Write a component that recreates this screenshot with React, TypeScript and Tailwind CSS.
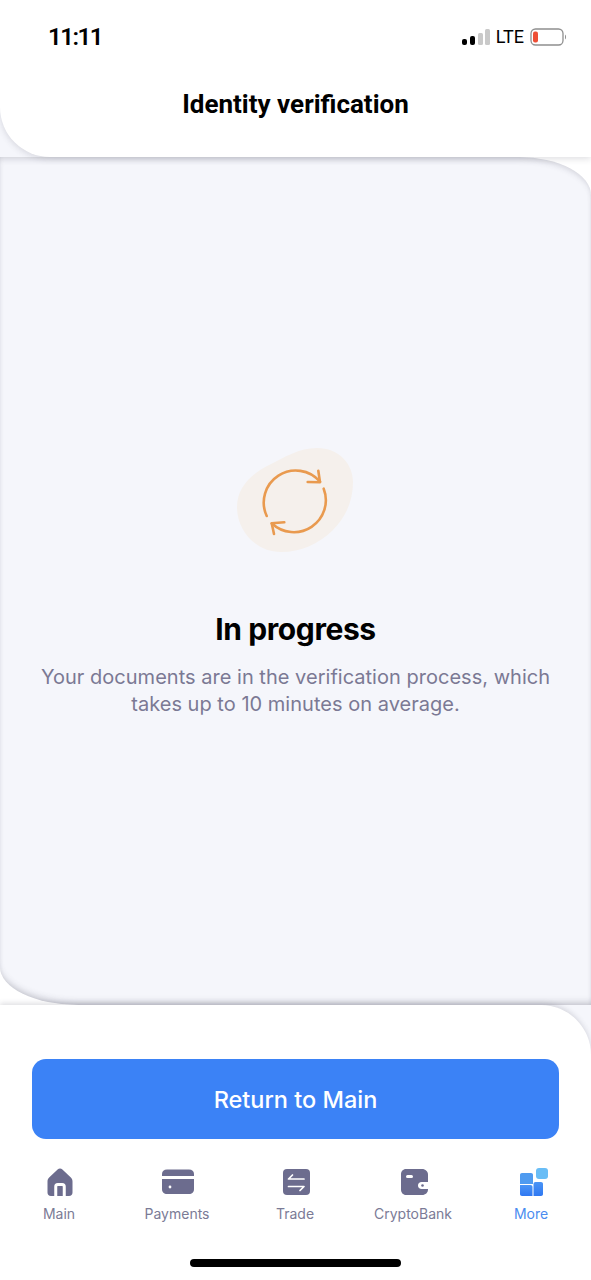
import React from 'react';

const Signal = () => (
  <svg width="28" height="16" viewBox="0 0 28 16">
    <rect x="0" y="10" width="5" height="6" rx="2" fill="#000" />
    <rect x="8" y="7" width="5" height="9" rx="2" fill="#000" />
    <rect x="16" y="4" width="5" height="12" rx="1.5" fill="#c9c9c9" />
    <rect x="23" y="0" width="5" height="16" rx="1.5" fill="#c9c9c9" />
  </svg>
);

const Battery = () => (
  <svg width="37" height="18" viewBox="0 0 37 18">
    <rect x="1" y="1" width="32" height="16" rx="4.5" fill="none" stroke="#8f8f8f" strokeWidth="1.3" />
    <rect x="3" y="3.5" width="5" height="11" rx="2" fill="#ee4f36" />
    <path d="M35 6.5 C36.4 7.4 36.4 10.6 35 11.5 Z" fill="#8f8f8f" />
  </svg>
);

const ProgressIcon = () => (
  <svg width="160" height="135" viewBox="0 0 160 135" fill="none">
    <path
      d="M102 18 C124 18 138 34 138 52 C138 72 130 88 118 100 C104 114 86 122 66 122 C40 122 22 100 22 77 C22 58 35 45 52 36 C70 27 84 18 102 18 Z"
      fill="#f5f0ec"
    />
    <g stroke="#e99a4f" strokeWidth="2.6" strokeLinecap="round" strokeLinejoin="round">
      <path d="M51.7 86 A32 32 0 0 1 105 51.7" />
      <path d="M103.3 40.7 L105 52.3 L92.7 52" />
      <path d="M108.7 58.7 A32 32 0 0 1 56.7 93.3" />
      <path d="M69.3 92.3 L56.7 93.3 L59 104" />
    </g>
  </svg>
);

const HomeIcon = () => (
  <svg width="30" height="30" viewBox="0 0 30 30">
    <path
      d="M12.6 2.6 C14 1.1 16 1.1 17.4 2.6 L25.6 10.2 C27 11.5 27.5 12.6 27.5 14.4 L27.5 25.5 C27.5 27.6 26.2 29 24 29 L6 29 C3.8 29 2.5 27.6 2.5 25.5 L2.5 14.4 C2.5 12.6 3 11.5 4.4 10.2 Z"
      fill="#6c6c8e"
    />
    <path d="M10.75 30 V19.5 C10.75 18.2 11.6 17.5 12.8 17.5 H17.2 C18.4 17.5 19.25 18.2 19.25 19.5 V30" fill="none" stroke="#fff" strokeWidth="3" />
  </svg>
);

const CardIcon = () => (
  <svg width="32" height="26" viewBox="0 0 32 26">
    <path d="M0 7 V5 C0 2 2 0.5 5 0.5 H27 C30 0.5 32 2 32 5 V7 Z" fill="#6c6c8e" />
    <path d="M0 10 H32 V20 C32 23.5 30 25 27 25 H5 C2 25 0 23.5 0 20 Z" fill="#6c6c8e" />
    <circle cx="8" cy="18" r="1.4" fill="#fff" />
  </svg>
);

const TradeIcon = () => (
  <svg width="27" height="26" viewBox="0 0 27 26">
    <rect x="0" y="0" width="27" height="26" rx="4" fill="#6c6c8e" />
    <g stroke="#fff" strokeWidth="1.7" strokeLinecap="round" strokeLinejoin="round" fill="none">
      <path d="M21 10 H5.5 L9.5 6" />
      <path d="M5.5 17.5 H21 L17 21.5" />
    </g>
  </svg>
);

const WalletIcon = () => (
  <svg width="27" height="26" viewBox="0 0 27 26">
    <path d="M5 0 H21 C24.5 0 27 2.5 27 5.5 V20.5 C27 23.5 24.5 26 21 26 H5 C2 26 0 23.5 0 20.5 V5 C0 2.5 2 0 5 0 Z" fill="#6c6c8e" />
    <rect x="5" y="6" width="7" height="3" rx="1.5" fill="#fff" />
    <path d="M20.5 13 H27 V20 H20.5 C18.5 20 17 18.5 17 16.5 C17 14.5 18.5 13 20.5 13 Z" fill="#fff" />
    <circle cx="21.5" cy="16.5" r="1.3" fill="#6c6c8e" />
  </svg>
);

const MoreIcon = () => (
  <svg width="32" height="30" viewBox="0 0 32 30">
    <defs>
      <linearGradient id="moreDark" x1="0" y1="0" x2="0" y2="1">
        <stop offset="0" stopColor="#4a94f5" />
        <stop offset="1" stopColor="#2f78f2" />
      </linearGradient>
    </defs>
    <rect x="20" y="1" width="12" height="11" rx="3" fill="#69bdf6" />
    <path d="M6 6 H15 C16.2 6 17 6.8 17 8 V17 H4 V8 C4 6.8 4.8 6 6 6 Z" fill="#4f9bf0" />
    <path d="M4 18 H14.5 C15.7 18 16.5 18.8 16.5 20 V29 H6 C4.8 29 4 28.2 4 27 Z" fill="url(#moreDark)" />
    <path d="M19.5 15 H25 C26.2 15 27 15.8 27 17 V27 C27 28.2 26.2 29 25 29 H17.5 V17 C17.5 15.8 18.3 15 19.5 15 Z" fill="url(#moreDark)" />
  </svg>
);

const tabs = [
  { label: 'Main', icon: <HomeIcon />, active: false },
  { label: 'Payments', icon: <CardIcon />, active: false },
  { label: 'Trade', icon: <TradeIcon />, active: false },
  { label: 'CryptoBank', icon: <WalletIcon />, active: false },
  { label: 'More', icon: <MoreIcon />, active: true },
];

export default function App() {
  return (
    <div className="flex h-[1280px] w-full flex-col overflow-hidden bg-white font-['Inter',sans-serif]">
      <div className="relative z-10 bg-[#f5f6fb]">
        <header className="h-[157px] rounded-bl-[50px] bg-white shadow-[0_2px_6px_rgba(60,60,80,0.16)]">
          <div className="flex items-center justify-between pt-[22px] pr-[24px] pl-[48px]">
            <span className="font-['Roboto',sans-serif] text-[24px] leading-[30px] font-semibold tracking-[-1.5px] text-black">
              11:11
            </span>
            <div className="flex items-center">
              <Signal />
              <span className="ml-[6px] font-['Roboto',sans-serif] text-[18px] leading-[30px] text-black">LTE</span>
              <span className="ml-[6px]">
                <Battery />
              </span>
            </div>
          </div>
          <h1 className="mt-[37px] text-center font-['Roboto',sans-serif] text-[26px] leading-[30px] font-bold text-black">
            Identity verification
          </h1>
        </header>
      </div>

      <div className="flex flex-1 flex-col bg-white">
        <main className="flex flex-1 flex-col items-center rounded-tr-[72px_38px] rounded-bl-[78px_38px] bg-[#f5f6fb] pt-[273px] shadow-[inset_0_5px_6px_-3px_rgba(60,60,80,0.2),inset_0_-6px_7px_-4px_rgba(60,60,80,0.3)]">
          <div className="-translate-x-px">
            <ProgressIcon />
          </div>
          <h2 className="mt-[45px] text-[30px] leading-[38px] font-bold tracking-[-0.4px] text-black">In progress</h2>
          <p className="mt-[16px] w-[530px] text-center text-[20px] leading-[27px] tracking-[0.02px] text-[#7b7994]">
            Your documents are in the verification process, which takes up to 10 minutes on average.
          </p>
        </main>
      </div>

      <div className="relative bg-[#f5f6fb]">
        <footer className="flex h-[275px] flex-col rounded-tr-[50px] bg-white px-0 pt-[54px] shadow-[0_-2px_5px_rgba(60,60,80,0.16)]">
          <button className="mx-[32px] h-[80px] rounded-[14px] bg-[#3b82f6] pt-[1px] text-[23.5px] font-medium text-white">
            Return to Main
          </button>
          <nav className="mt-[28px] grid grid-cols-5 pr-[1px]">
            {tabs.map((tab) => (
              <div key={tab.label} className="flex flex-col items-center">
                <div className="flex h-[30px] items-center justify-center pl-[2px]">{tab.icon}</div>
                <span className={`mt-[7px] text-[14px] leading-[20px] ${tab.active ? 'text-[#4a8cf0]' : 'text-[#7b7b96]'}`}>
                  {tab.label}
                </span>
              </div>
            ))}
          </nav>
          <div className="mx-auto mt-[35px] h-[8px] w-[211px] rounded-full bg-black" />
        </footer>
      </div>
    </div>
  );
}
